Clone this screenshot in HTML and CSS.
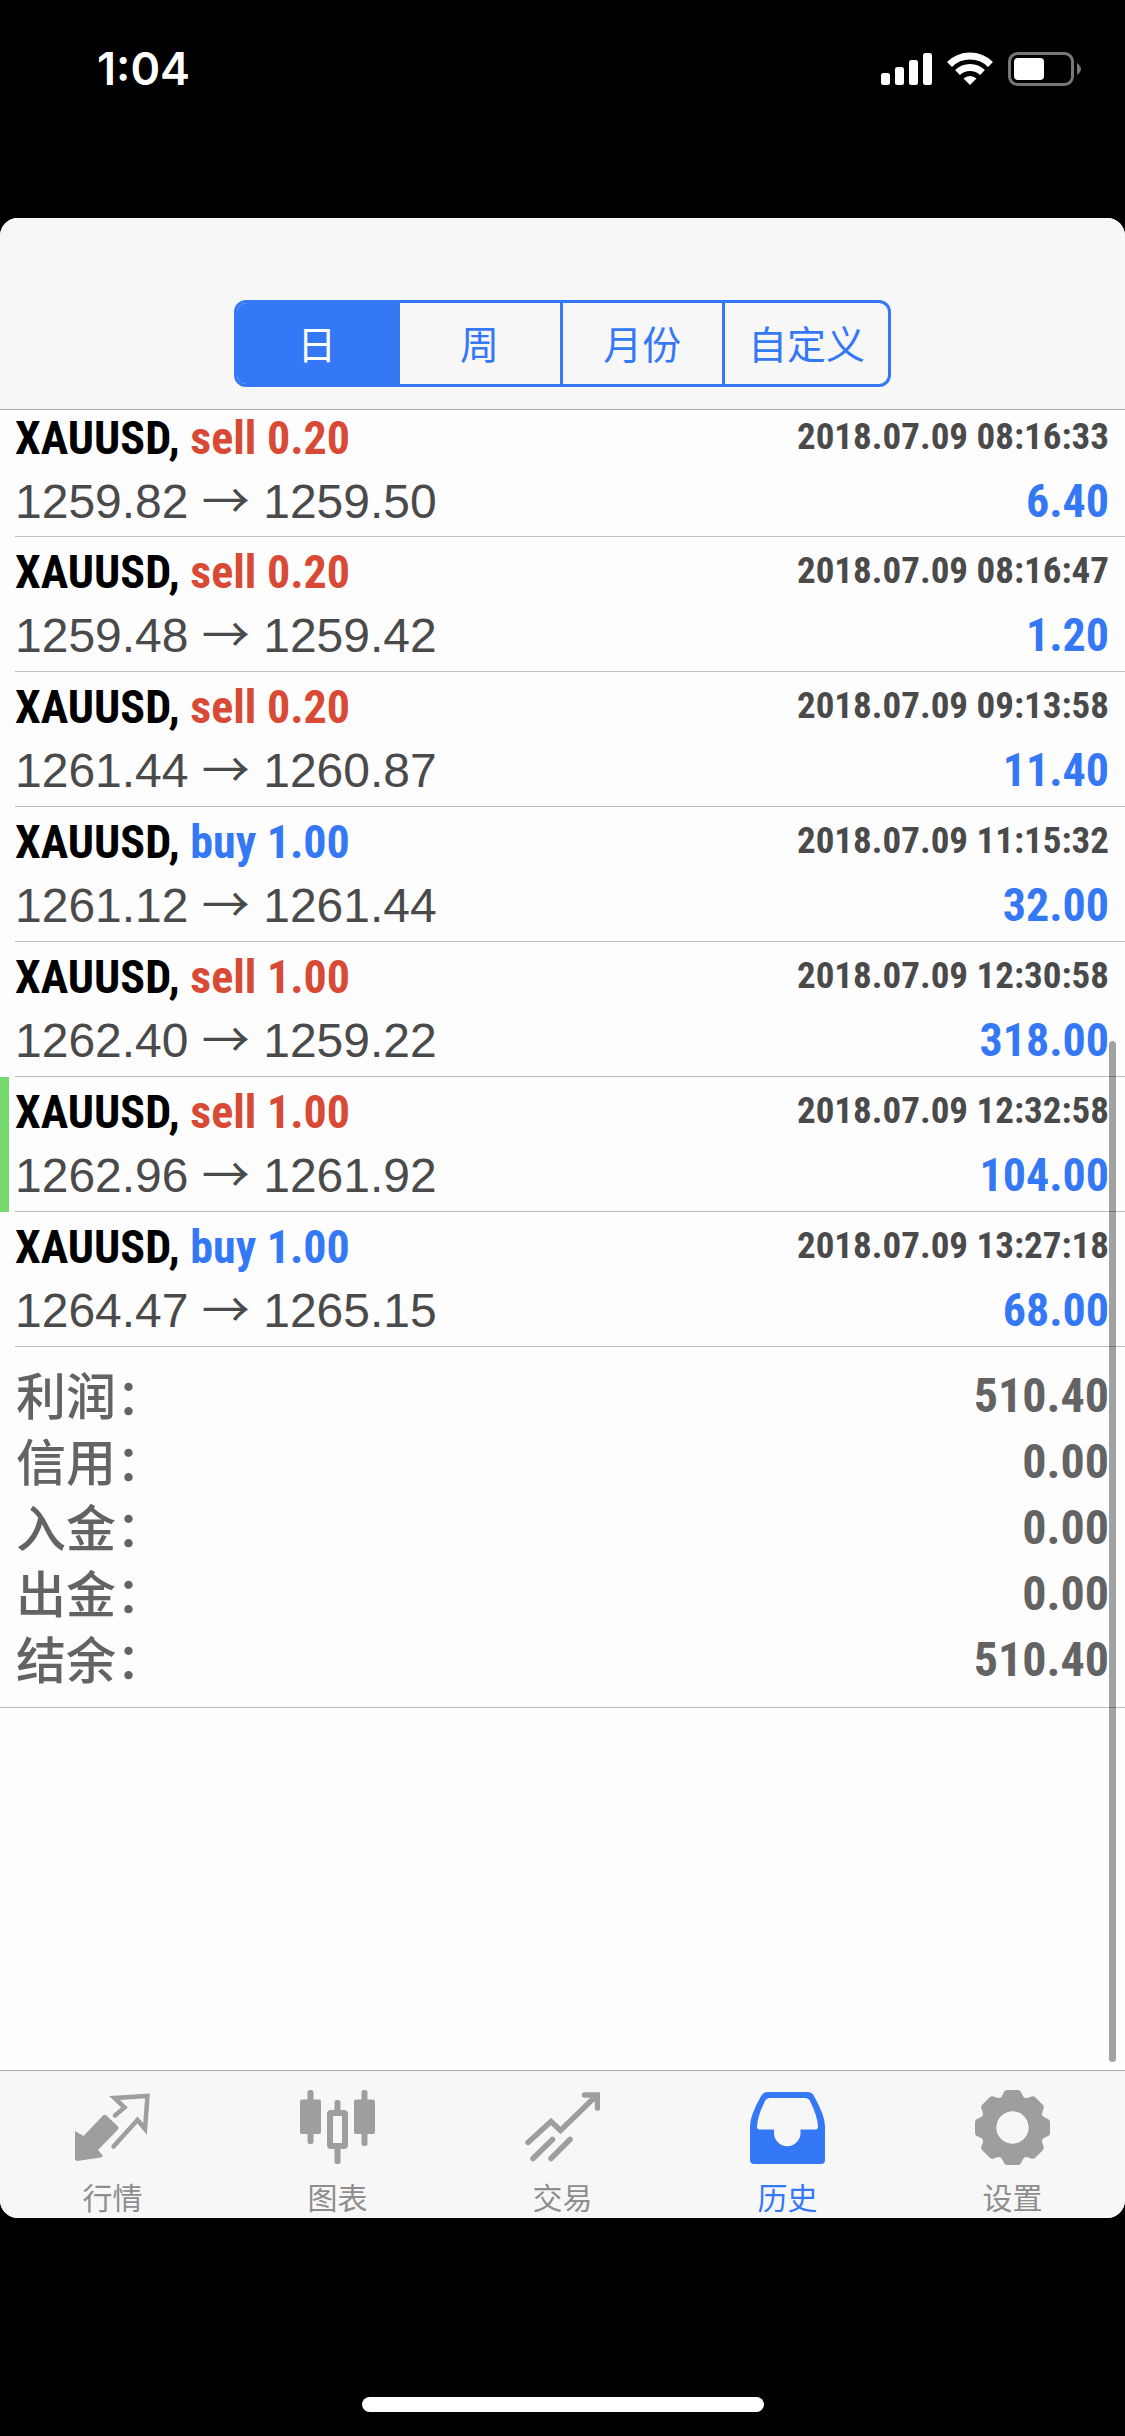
FILE: index.html
```html
<!DOCTYPE html>
<html lang="zh-CN">
<head>
<meta charset="utf-8">
<meta name="viewport" content="width=device-width, initial-scale=1">
<title>历史</title>
<link rel="stylesheet" href="styles.css">
</head>
<body>
<header class="status-bar">
  <time class="clock">1:04</time>
  <div class="status-icons">
    <svg width="51" height="34" viewBox="0 0 51 34" fill="#fff" role="img" aria-label="信号">
      <rect x="0" y="21" width="9" height="12" rx="2.5"/><rect x="14" y="15" width="9" height="18" rx="2.5"/><rect x="28" y="8" width="9" height="25" rx="2.5"/><rect x="42" y="1" width="9" height="32" rx="2.5"/>
    </svg>
    <svg width="46" height="34" viewBox="0 0 46 34" role="img" aria-label="Wi-Fi">
      <g fill="none" stroke="#fff" stroke-width="7"><path d="M2.500 12.500A29 29 0 0 1 43.500 12.500"/><path d="M10.500 20.500A18 18 0 0 1 35.500 20.500"/></g>
      <path fill="#fff" d="M16.500 26.500a9.500 9.500 0 0 1 13 0L23 33z"/>
    </svg>
    <svg width="74" height="34" viewBox="0 0 74 34" role="img" aria-label="电池">
      <rect x="1.500" y="1.500" width="63" height="31" rx="8" fill="none" stroke="#777" stroke-width="3"/>
      <rect x="6" y="6" width="30" height="22" rx="4" fill="#fff"/>
      <path d="M69 11q4 3 4 6t-4 6z" fill="#777"/>
    </svg>
  </div>
</header>

<div class="app">
  <nav class="toolbar" aria-label="时间范围">
    <div class="segments">
      <button class="segment is-active" type="button" aria-pressed="true">日</button>
      <button class="segment" type="button" aria-pressed="false">周</button>
      <button class="segment" type="button" aria-pressed="false">月份</button>
      <button class="segment" type="button" aria-pressed="false">自定义</button>
    </div>
  </nav>

  <main class="history">
    <ul class="deals">
      <li class="deal"><div class="deal-body">
        <div class="line"><b class="name">XAUUSD, <span class="sell">sell 0.20</span></b><time class="date">2018.07.09 08:16:33</time></div>
        <div class="line"><span class="price">1259.82 <span class="arrow">→</span> 1259.50</span><b class="profit">6.40</b></div>
      </div></li>
      <li class="deal"><div class="deal-body">
        <div class="line"><b class="name">XAUUSD, <span class="sell">sell 0.20</span></b><time class="date">2018.07.09 08:16:47</time></div>
        <div class="line"><span class="price">1259.48 <span class="arrow">→</span> 1259.42</span><b class="profit">1.20</b></div>
      </div></li>
      <li class="deal"><div class="deal-body">
        <div class="line"><b class="name">XAUUSD, <span class="sell">sell 0.20</span></b><time class="date">2018.07.09 09:13:58</time></div>
        <div class="line"><span class="price">1261.44 <span class="arrow">→</span> 1260.87</span><b class="profit">11.40</b></div>
      </div></li>
      <li class="deal"><div class="deal-body">
        <div class="line"><b class="name">XAUUSD, <span class="buy">buy 1.00</span></b><time class="date">2018.07.09 11:15:32</time></div>
        <div class="line"><span class="price">1261.12 <span class="arrow">→</span> 1261.44</span><b class="profit">32.00</b></div>
      </div></li>
      <li class="deal"><div class="deal-body">
        <div class="line"><b class="name">XAUUSD, <span class="sell">sell 1.00</span></b><time class="date">2018.07.09 12:30:58</time></div>
        <div class="line"><span class="price">1262.40 <span class="arrow">→</span> 1259.22</span><b class="profit">318.00</b></div>
      </div></li>
      <li class="deal is-marked"><div class="deal-body">
        <div class="line"><b class="name">XAUUSD, <span class="sell">sell 1.00</span></b><time class="date">2018.07.09 12:32:58</time></div>
        <div class="line"><span class="price">1262.96 <span class="arrow">→</span> 1261.92</span><b class="profit">104.00</b></div>
      </div></li>
      <li class="deal"><div class="deal-body">
        <div class="line"><b class="name">XAUUSD, <span class="buy">buy 1.00</span></b><time class="date">2018.07.09 13:27:18</time></div>
        <div class="line"><span class="price">1264.47 <span class="arrow">→</span> 1265.15</span><b class="profit">68.00</b></div>
      </div></li>
    </ul>

    <dl class="summary">
      <div class="total"><dt>利润：</dt><dd>510.40</dd></div>
      <div class="total"><dt>信用：</dt><dd>0.00</dd></div>
      <div class="total"><dt>入金：</dt><dd>0.00</dd></div>
      <div class="total"><dt>出金：</dt><dd>0.00</dd></div>
      <div class="total"><dt>结余：</dt><dd>510.40</dd></div>
    </dl>
    <div class="scroll-thumb" aria-hidden="true"></div>
  </main>

  <nav class="tabs" aria-label="主导航">
    <a class="tab" href="#quotes">
      <svg class="tab-icon" viewBox="0 0 75 75" aria-hidden="true">
        <path fill="currentColor" d="M0 41l8.500 5L27.500 26q2-2.500 4.500 0L42.500 36q2 2 0 4L23 60l4.500 5q.500 2-1.500 2.500L2 71l-2-1z"/>
        <path fill="none" stroke="currentColor" stroke-width="4.500" stroke-linecap="round" d="M40 25.500l9.500-8L39.500 8 72.500 6 70 39l-7.500-9L38.500 56.500"/>
      </svg>
      <span>行情</span>
    </a>
    <a class="tab" href="#charts">
      <svg class="tab-icon" viewBox="0 0 75 75" fill="currentColor" aria-hidden="true">
        <rect x="0" y="9.500" width="21" height="34.500" rx="2"/><rect x="7.500" width="6" height="54" rx="2.500"/>
        <rect x="54" y="9.500" width="21" height="34.500" rx="2"/><rect x="61.500" width="6" height="56" rx="2.500"/>
        <rect x="34.500" y="10" width="6" height="14" rx="2.500"/><rect x="34.500" y="56" width="6" height="18" rx="2.500"/>
        <rect x="30" y="23" width="15" height="33" rx="1" fill="none" stroke="currentColor" stroke-width="6"/>
      </svg>
      <span>图表</span>
    </a>
    <a class="tab" href="#trade">
      <svg class="tab-icon" viewBox="0 0 75 75" fill="none" stroke="currentColor" stroke-width="5.500" stroke-linecap="round" aria-hidden="true">
        <path d="M3 52.500L26 31.500l9.500 9L72 5M59.500 5H72.500V18M8 68.500l19.500-19M26 68.500l19-19"/>
      </svg>
      <span>交易</span>
    </a>
    <a class="tab is-active" href="#history" aria-current="page">
      <svg class="tab-icon" viewBox="0 0 75 75" fill="currentColor" fill-rule="evenodd" aria-hidden="true">
        <path d="M18 2H57q5.500 0 7.500 5Q75 26 75 36V70q0 4-4 4H4q-4 0-4-4V36Q0 26 10.500 7 12.500 2 18 2zM20 8q-3.500 0-5 3Q7.500 26 7 36.500 7 39.500 9.500 39.500H24V43a13 13 0 0 0 26.500 0V39.500H65.500Q68 39.500 68 36.500 67.500 26 60 11q-1.500-3-5-3z"/>
      </svg>
      <span>历史</span>
    </a>
    <a class="tab" href="#settings">
      <svg class="tab-icon" viewBox="0 0 75 75" aria-hidden="true">
        <defs><path id="tooth" d="M-15-27Q-10-31-9-34.500-8-37.500-5-37.500H5Q8-37.500 9-34.500 10-31 15-27z"/></defs>
        <g fill="currentColor" transform="translate(37.500 37.500)">
          <use href="#tooth"/><use href="#tooth" transform="rotate(45)"/><use href="#tooth" transform="rotate(90)"/><use href="#tooth" transform="rotate(135)"/><use href="#tooth" transform="rotate(180)"/><use href="#tooth" transform="rotate(225)"/><use href="#tooth" transform="rotate(270)"/><use href="#tooth" transform="rotate(315)"/>
          <circle r="23" fill="none" stroke="currentColor" stroke-width="14"/>
          <circle r="16" fill="#f7f7f7"/>
        </g>
      </svg>
      <span>设置</span>
    </a>
  </nav>
</div>

<footer class="home-area"><div class="home-bar"></div></footer>
</body>
</html>
```

FILE: styles.css
```css
:root {
  --blue: #3478f6;
  --red: #d84a36;
  --line: #bcbcbc;
  --bar: #f7f7f7;
  --sans: "Liberation Sans", "Noto Sans CJK SC", sans-serif;
  --narrow: "Roboto Condensed", "Liberation Sans Narrow", "Liberation Sans", sans-serif;
  --cjk: "Noto Sans CJK SC", sans-serif;
}

* { box-sizing: border-box; }

body {
  margin: 0;
  min-height: 100vh;
  display: flex;
  flex-direction: column;
  background: #000;
  font-family: var(--sans);
}

ul, dl, dd { margin: 0; padding: 0; list-style: none; }

.status-bar {
  height: 218px;
  padding: 41px 43px 0 97px;
  display: flex;
  justify-content: space-between;
  align-items: flex-start;
}
.clock {
  color: #fff;
  font: 600 45px/56px Inter, sans-serif;
}
.status-icons {
  display: flex;
  gap: 15px;
  padding-top: 11px;
}

.app {
  flex: 1;
  display: flex;
  flex-direction: column;
  overflow: hidden;
  border-radius: 18px;
  background: #fdfdfd;
}

.toolbar {
  height: 192px;
  padding: 82px 20px 0;
  background: var(--bar);
  border-bottom: 1px solid #aaa;
}
.segments {
  max-width: 657px;
  height: 87px;
  margin: 0 auto;
  display: grid;
  grid-template-columns: repeat(4, 1fr);
  border: 3px solid var(--blue);
  border-radius: 12px;
  overflow: hidden;
}
.segment {
  padding: 0 0 4px;
  border: 0;
  border-right: 3px solid var(--blue);
  background: transparent;
  color: var(--blue);
  font: 400 39px/56px var(--cjk);
}
.segment:last-child { border-right: 0; }
.segment.is-active { background: var(--blue); color: #fff; }

.history {
  position: relative;
  flex: 1;
  overflow: hidden;
}

.deal {
  border-left: 9px solid transparent;
  padding-left: 6px;
}
.deal.is-marked { border-left-color: #76d96e; }
.deal-body {
  height: 135px;
  padding: 7px 16px 0 0;
  display: flex;
  flex-direction: column;
  gap: 7px;
  border-bottom: 1px solid var(--line);
}
.deal:first-child .deal-body {
  height: 127px;
  padding-top: 0;
}
.line {
  display: flex;
  justify-content: space-between;
  line-height: 56px;
}
.name, .profit { font: 700 46px/56px var(--narrow); }
.sell { color: var(--red); }
.buy, .profit { color: var(--blue); }
.date {
  color: #4a4a4a;
  font: 700 37px/54px var(--narrow);
}
.price {
  color: #4a4a4a;
  font-size: 48px;
}
.arrow { font-family: var(--cjk); line-height: 1; }

.summary {
  padding: 16px 16px 14px;
  border-bottom: 1px solid var(--line);
  color: #636363;
}
.total {
  display: flex;
  justify-content: space-between;
}
.total dt { font: 500 50px/60px var(--cjk); }
.total dd { font: 700 48px/66px var(--narrow); }

.scroll-thumb {
  position: absolute;
  top: 38%;
  right: 9px;
  bottom: 8px;
  width: 7px;
  border-radius: 4px;
  background: rgba(0, 0, 0, .36);
}

.tabs {
  height: 148px;
  padding-top: 19px;
  display: grid;
  grid-template-columns: repeat(5, 1fr);
  background: var(--bar);
  border-top: 1px solid #aaa;
}
.tab {
  display: flex;
  flex-direction: column;
  align-items: center;
  color: #9e9e9e;
  font: 400 30px/40px var(--cjk);
  text-decoration: none;
}
.tab span { padding-top: 11px; color: #8e8e8e; }
.tab.is-active, .tab.is-active span { color: var(--blue); }
.tab-icon { width: 75px; height: 75px; }

.home-area {
  height: 218px;
  padding-bottom: 24px;
  display: flex;
  align-items: flex-end;
  justify-content: center;
}
.home-bar {
  width: 402px;
  height: 15px;
  border-radius: 8px;
  background: #fff;
}
```
